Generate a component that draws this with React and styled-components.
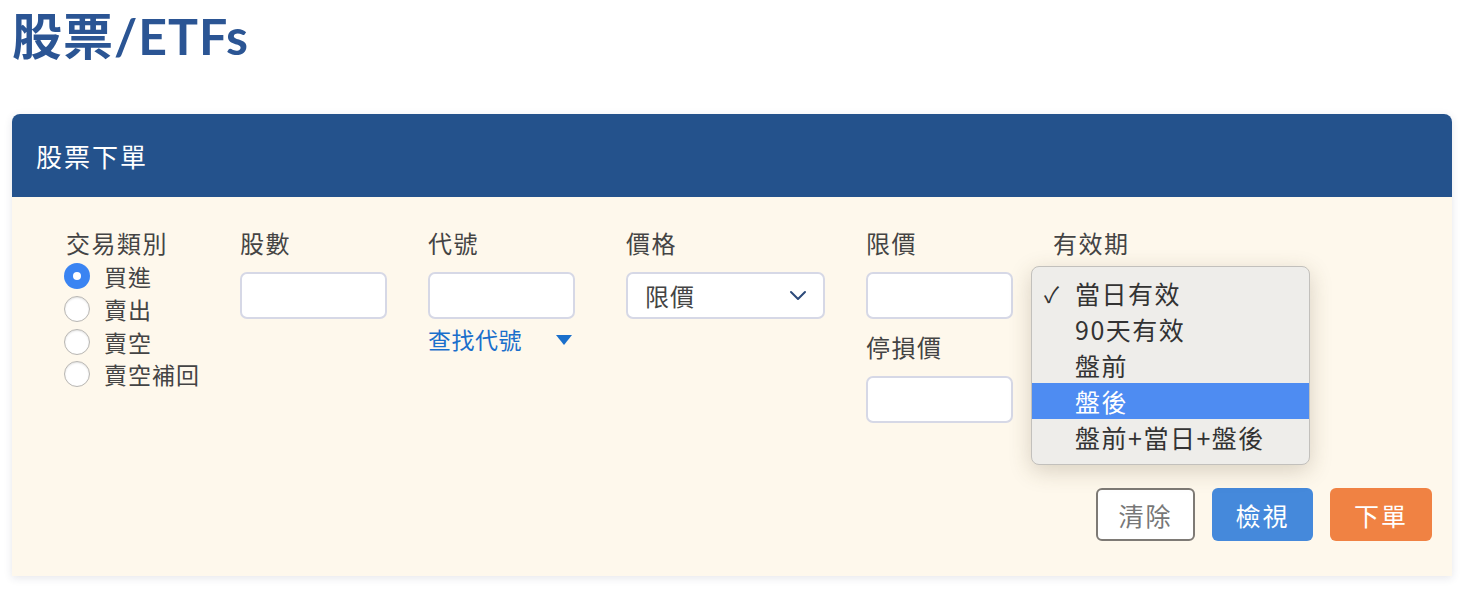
import React, { useState } from 'react'
import styled, { createGlobalStyle } from 'styled-components'

const GlobalStyle = createGlobalStyle`
  body {
    margin: 0;
    background: #fff;
    font-family: "Noto Sans CJK TC", "Noto Sans", sans-serif;
  }
`

const TRADE_TYPES = ['買進', '賣出', '賣空', '賣空補回']
const DURATIONS = ['當日有效', '90天有效', '盤前', '盤後', '盤前+當日+盤後']

const Page = styled.div`
  padding: 0 14px 18px 12px;
`
const Title = styled.h1`
  margin: 0;
  height: 72px;
  line-height: 72px;
  font-family: "Lato", "Noto Sans CJK TC", sans-serif;
  font-size: 50px;
  font-weight: 700;
  letter-spacing: 1px;
  color: #2b5594;
`
const Card = styled.section`
  margin-top: 42px;
  border-radius: 8px 8px 0 0;
  box-shadow: 0 2px 8px rgba(40, 50, 80, 0.12);
`
const CardHeader = styled.div`
  height: 83px;
  display: flex;
  align-items: center;
  padding-left: 24px;
  background: #24528c;
  border-radius: 8px 8px 0 0;
  color: #fff;
  font-size: 26px;
  letter-spacing: 2px;
`
const CardBody = styled.div`
  background: #fef8ec;
  padding: 32px 20px 35px 52px;
`
const FormGrid = styled.div`
  display: grid;
  grid-template-columns: 176px 188px 198px 240px 187px 1fr;
  align-items: start;
`
const Field = styled.div`
  display: flex;
  flex-direction: column;
  align-items: flex-start;
  position: relative;
`
const Label = styled.label`
  height: 28px;
  line-height: 28px;
  font-size: 24px;
  letter-spacing: 1.5px;
  color: #444;
  margin: ${p => (p.$second ? '14px 0 15px' : '0 0 15px')};
  padding-left: ${p => (p.$indent ? '2px' : '0')};
`
const RadioList = styled.div`
  display: flex;
  flex-direction: column;
  margin-top: -12px;
`
const RadioRow = styled.label`
  display: flex;
  align-items: center;
  gap: 14px;
  height: 32.7px;
  font-size: 23px;
  letter-spacing: 1px;
  color: #444;
`
const RadioDot = styled.span`
  width: 26px;
  height: 26px;
  border-radius: 50%;
  box-sizing: border-box;
  background: ${p => (p.$on ? '#3a84f2' : '#fff')};
  border: ${p => (p.$on ? 'none' : '1px solid #b8b6b2')};
  box-shadow: ${p => (p.$on ? 'none' : 'inset 0 1px 2px rgba(0,0,0,0.12)')};
  display: flex;
  align-items: center;
  justify-content: center;
  &::after {
    content: '';
    display: ${p => (p.$on ? 'block' : 'none')};
    width: 8px;
    height: 8px;
    border-radius: 50%;
    background: #fff;
  }
`
const TextInput = styled.input`
  width: ${p => p.$w || 147}px;
  height: 47px;
  box-sizing: border-box;
  border: 2px solid #d6d8e6;
  border-radius: 7px;
  background: #fff;
  font-size: 20px;
  padding: 0 12px;
  outline: none;
`
const SelectBox = styled.div`
  width: ${p => p.$w}px;
  height: 47px;
  box-sizing: border-box;
  border: 2px solid ${p => (p.$focus ? '#8eaee0' : '#d6d8e6')};
  border-radius: 7px;
  background: #fff;
  display: flex;
  align-items: center;
  justify-content: space-between;
  padding: 0 16px 0 17px;
  font-size: 24px;
  letter-spacing: 1px;
  color: #444;
`
const LookupLink = styled.a`
  margin-top: 6px;
  display: flex;
  align-items: center;
  gap: 34px;
  font-size: 23px;
  letter-spacing: 0.5px;
  line-height: 28px;
  color: #1a6fcb;
  text-decoration: none;
  cursor: pointer;
`
const Caret = styled.span`
  width: 0;
  height: 0;
  border-left: 8px solid transparent;
  border-right: 8px solid transparent;
  border-top: 10px solid #1a6fcb;
  margin-top: 2px;
`
const Menu = styled.ul`
  position: absolute;
  top: 37px;
  left: -22px;
  width: 279px;
  box-sizing: border-box;
  margin: 0;
  padding: 8px 0 9px;
  list-style: none;
  background: #eeedea;
  border: 1px solid #c2c0bc;
  border-radius: 8px;
  box-shadow: 0 6px 22px rgba(80, 70, 40, 0.22);
  z-index: 5;
`
const MenuItem = styled.li`
  height: 36px;
  display: flex;
  align-items: center;
  padding-left: 12px;
  font-size: 25px;
  letter-spacing: 1.5px;
  color: ${p => (p.$active ? '#fff' : '#333')};
  background: ${p => (p.$active ? '#4e8cf2' : 'transparent')};
`
const Check = styled.span`
  width: 31px;
  font-size: 22px;
`
const Actions = styled.div`
  display: flex;
  justify-content: flex-end;
  gap: 17px;
  margin-top: 65px;
`
const Button = styled.button`
  width: ${p => p.$w}px;
  height: 53px;
  box-sizing: border-box;
  border-radius: 6px;
  font-family: inherit;
  font-size: 25px;
  letter-spacing: 2px;
  cursor: pointer;
  border: ${p => (p.$variant === 'outline' ? '2px solid #7e7a75' : 'none')};
  color: ${p => (p.$variant === 'outline' ? '#777' : '#fff')};
  background: ${p =>
    p.$variant === 'primary' ? '#4589db' : p.$variant === 'accent' ? '#f08243' : '#fff'};
`

function Chevron() {
  return (
    <svg width="18" height="12" viewBox="0 0 18 12" fill="none">
      <path d="M2 2l7 7 7-7" stroke="#2c4a7a" strokeWidth="2" strokeLinecap="round" strokeLinejoin="round" />
    </svg>
  )
}

export default function App() {
  const [tradeType, setTradeType] = useState('買進')
  return (
    <Page>
      <GlobalStyle />
      <Title>股票/ETFs</Title>
      <Card>
        <CardHeader>股票下單</CardHeader>
        <CardBody>
          <FormGrid>
            <Field>
              <Label $indent>交易類別</Label>
              <RadioList>
                {TRADE_TYPES.map(t => (
                  <RadioRow key={t} onClick={() => setTradeType(t)}>
                    <RadioDot $on={tradeType === t} />
                    {t}
                  </RadioRow>
                ))}
              </RadioList>
            </Field>
            <Field>
              <Label>股數</Label>
              <TextInput />
            </Field>
            <Field>
              <Label>代號</Label>
              <TextInput />
              <LookupLink>
                查找代號
                <Caret />
              </LookupLink>
            </Field>
            <Field>
              <Label>價格</Label>
              <SelectBox $w={199}>
                限價
                <Chevron />
              </SelectBox>
            </Field>
            <Field>
              <Label>限價</Label>
              <TextInput />
              <Label $second>停損價</Label>
              <TextInput />
            </Field>
            <Field>
              <Label>有效期</Label>
              <SelectBox $w={182} $focus aria-label="當日有效" />
              <Menu>
                {DURATIONS.map((d, i) => (
                  <MenuItem key={d} $active={d === '盤後'}>
                    <Check>{i === 0 ? '✓' : ''}</Check>
                    {d}
                  </MenuItem>
                ))}
              </Menu>
            </Field>
          </FormGrid>
          <Actions>
            <Button $w={99} $variant="outline">清除</Button>
            <Button $w={101} $variant="primary">檢視</Button>
            <Button $w={102} $variant="accent">下單</Button>
          </Actions>
        </CardBody>
      </Card>
    </Page>
  )
}
